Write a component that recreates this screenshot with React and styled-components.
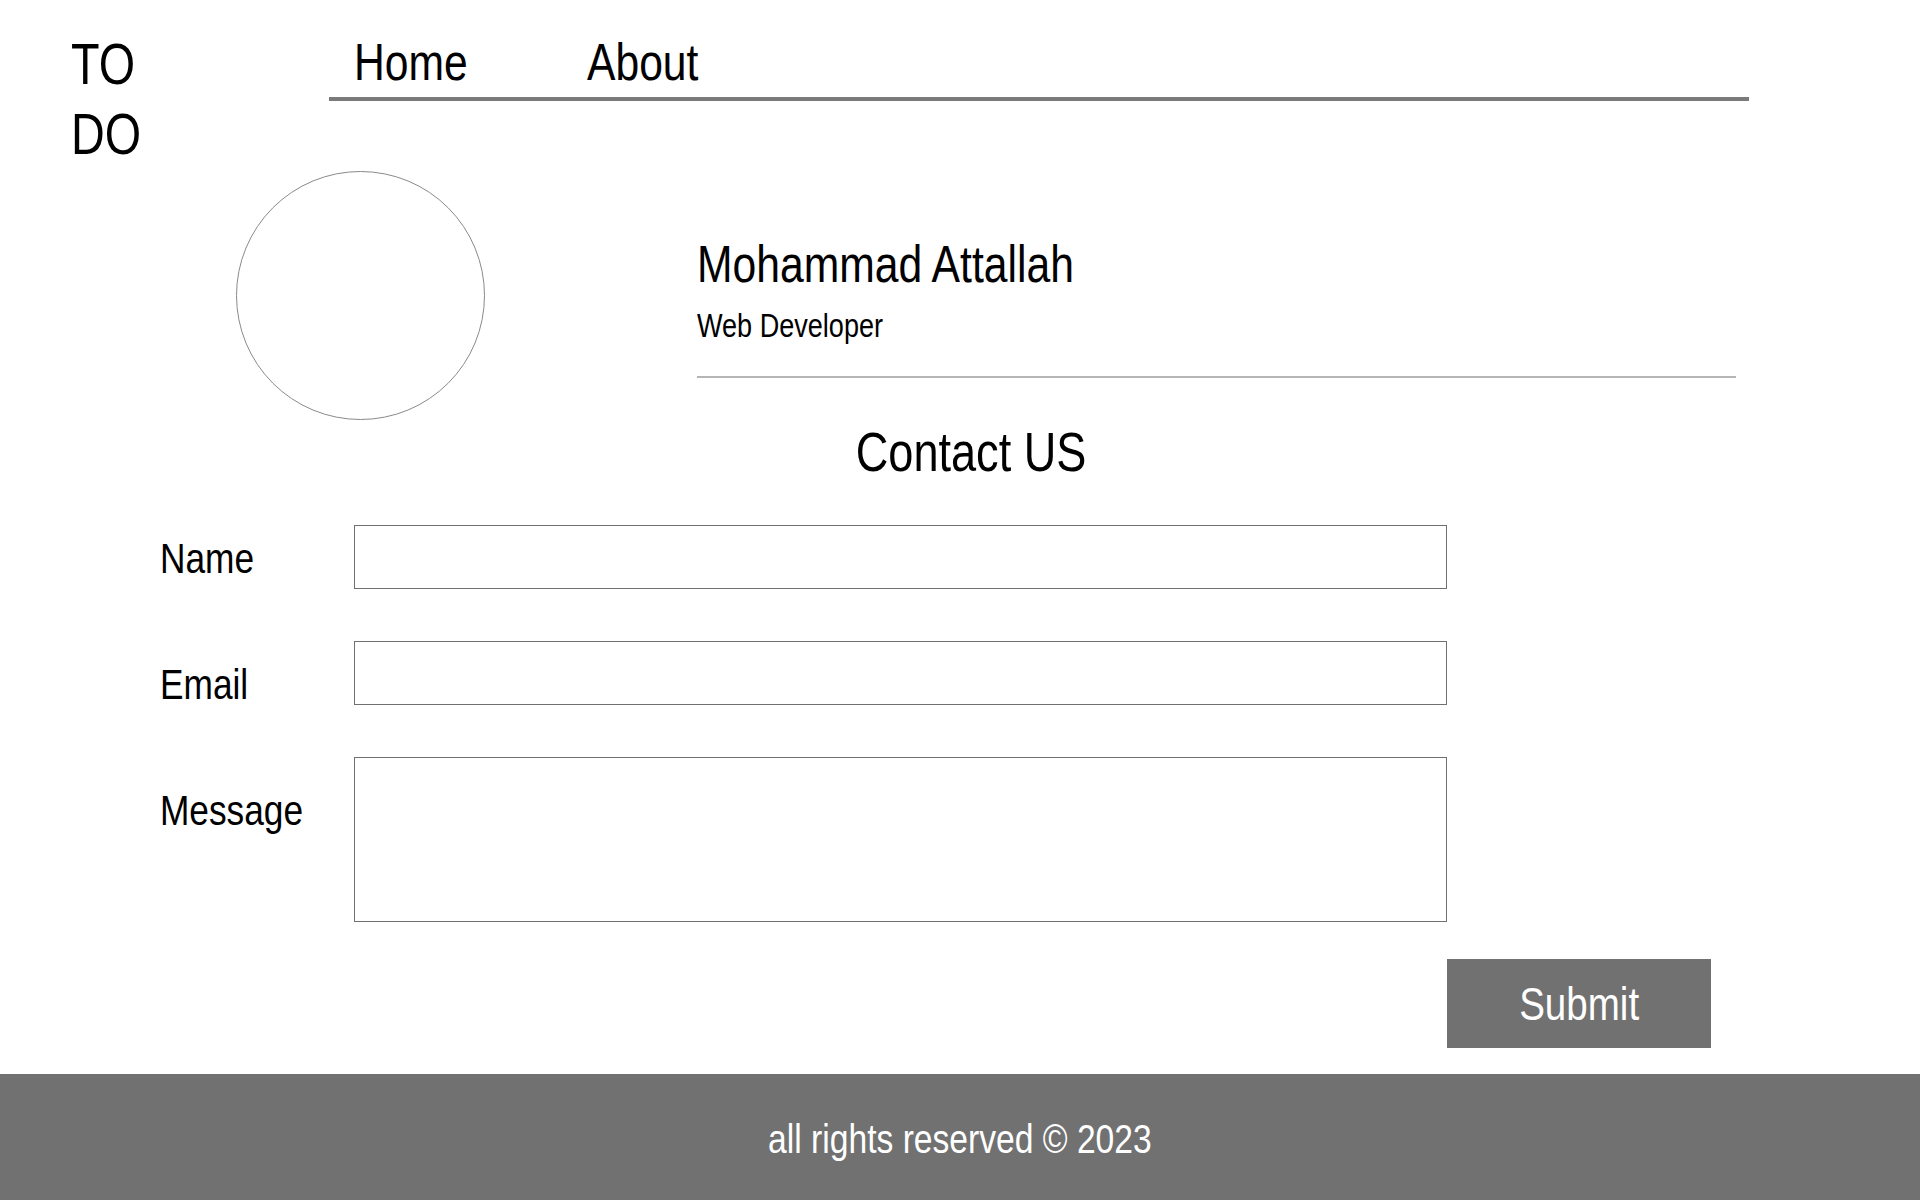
import React from "react";
import styled, { createGlobalStyle, css } from "styled-components";

const GlobalStyle = createGlobalStyle`
  html, body {
    margin: 0;
    padding: 0;
    background: #fff;
  }
  body {
    font-family: "Liberation Sans", Arial, sans-serif;
    color: #000;
  }
  * { box-sizing: border-box; }
`;

// no narrow face is installed, so squeeze Liberation Sans to Arial Narrow widths
const narrow = (origin = "left") => css`
  transform: scaleX(0.82);
  transform-origin: ${origin} center;
`;

const Page = styled.div`
  min-height: 100vh;
  display: flex;
  flex-direction: column;
`;

const Main = styled.main`
  flex: 1;
`;

// Header: logo + nav
const Header = styled.header`
  display: flex;
  align-items: flex-start;
  padding: 29px 0 0 71px;
`;

const Logo = styled.div`
  width: 258px;
  font-size: 57px;
  line-height: 70px;
  ${narrow()}
`;

const Nav = styled.nav`
  width: 1420px;
  display: flex;
  gap: 94px;
  margin-top: 2px;
  padding: 0 0 4px 25px;
  border-bottom: 4px solid #7a7a7a;
`;

const NavLink = styled.a`
  display: inline-block;
  font-size: 52px;
  line-height: 62px;
  color: #000;
  text-decoration: none;
  cursor: pointer;
  ${narrow()}
`;

// Profile
const Profile = styled.section`
  display: flex;
  align-items: flex-start;
  padding-left: 236px;
  margin-top: 2px;
`;

const Avatar = styled.div`
  width: 249px;
  height: 249px;
  border-radius: 50%;
  border: 1px solid #8a8a8a;
  flex-shrink: 0;
`;

const Info = styled.div`
  width: 1039px;
  margin-left: 212px;
  padding-top: 62px;
`;

const Name = styled.h1`
  margin: 0;
  font-size: 52px;
  line-height: 62px;
  font-weight: normal;
  white-space: nowrap;
  ${narrow()}
`;

const Role = styled.p`
  margin: 11px 0 0;
  font-size: 33px;
  line-height: 39px;
  white-space: nowrap;
  ${narrow()}
`;

const Divider = styled.hr`
  margin: 31px 0 0;
  border: 0;
  height: 2px;
  background: #b5b5b5;
`;

// Contact form
const Title = styled.h2`
  margin: 0;
  padding-left: 27px;
  text-align: center;
  font-size: 55px;
  line-height: 65px;
  font-weight: normal;
  ${narrow("center")}
`;

const Form = styled.form`
  display: flex;
  align-items: flex-start;
  margin-top: 40px;
  padding-left: 160px;
`;

const Labels = styled.div`
  width: 194px;
  display: flex;
  flex-direction: column;
  gap: 74px;
  padding-top: 7px;
`;

const Label = styled.label`
  display: block;
  font-size: 43px;
  line-height: 52px;
  white-space: nowrap;
  ${narrow()}
`;

const Fields = styled.div`
  display: flex;
  flex-direction: column;
  gap: 52px;
`;

const Input = styled.input`
  width: 1093px;
  height: 64px;
  border: 1px solid #707070;
  border-radius: 0;
  font: inherit;
  font-size: 28px;
  padding: 0 12px;
  outline: none;
`;

const TextArea = styled.textarea`
  width: 1093px;
  height: 165px;
  border: 1px solid #707070;
  border-radius: 0;
  font: inherit;
  font-size: 28px;
  padding: 10px 12px;
  resize: none;
  outline: none;
  display: block;
`;

const Actions = styled.div`
  display: flex;
  padding-left: 1447px;
  margin-top: 37px;
`;

const SubmitButton = styled.button`
  width: 264px;
  height: 89px;
  border: 0;
  padding: 0;
  background: #717171;
  color: #fff;
  font-family: inherit;
  font-size: 47px;
  cursor: pointer;
`;

const ButtonText = styled.span`
  display: inline-block;
  ${narrow("center")}
`;

const Footer = styled.footer`
  height: 126px;
  padding-top: 5px;
  background: #717171;
  color: #fff;
  display: flex;
  align-items: center;
  justify-content: center;
  font-size: 41px;
`;

const FooterText = styled.span`
  display: inline-block;
  white-space: nowrap;
  ${narrow("center")}
`;

export default function App() {
  return (
    <Page>
      <GlobalStyle />
      <Main>
        <Header>
          <Logo>
            TO
            <br />
            DO
          </Logo>
          <Nav>
            <NavLink>Home</NavLink>
            <NavLink>About</NavLink>
          </Nav>
        </Header>

        <Profile>
          <Avatar />
          <Info>
            <Name>Mohammad Attallah</Name>
            <Role>Web Developer</Role>
            <Divider />
          </Info>
        </Profile>

        <Title>Contact US</Title>

        <Form onSubmit={(e) => e.preventDefault()}>
          <Labels>
            <Label htmlFor="name">Name</Label>
            <Label htmlFor="email">Email</Label>
            <Label htmlFor="message">Message</Label>
          </Labels>
          <Fields>
            <Input id="name" type="text" />
            <Input id="email" type="email" />
            <TextArea id="message" />
          </Fields>
        </Form>

        <Actions>
          <SubmitButton type="submit">
            <ButtonText>Submit</ButtonText>
          </SubmitButton>
        </Actions>
      </Main>
      <Footer>
        <FooterText>all rights reserved © 2023</FooterText>
      </Footer>
    </Page>
  );
}
